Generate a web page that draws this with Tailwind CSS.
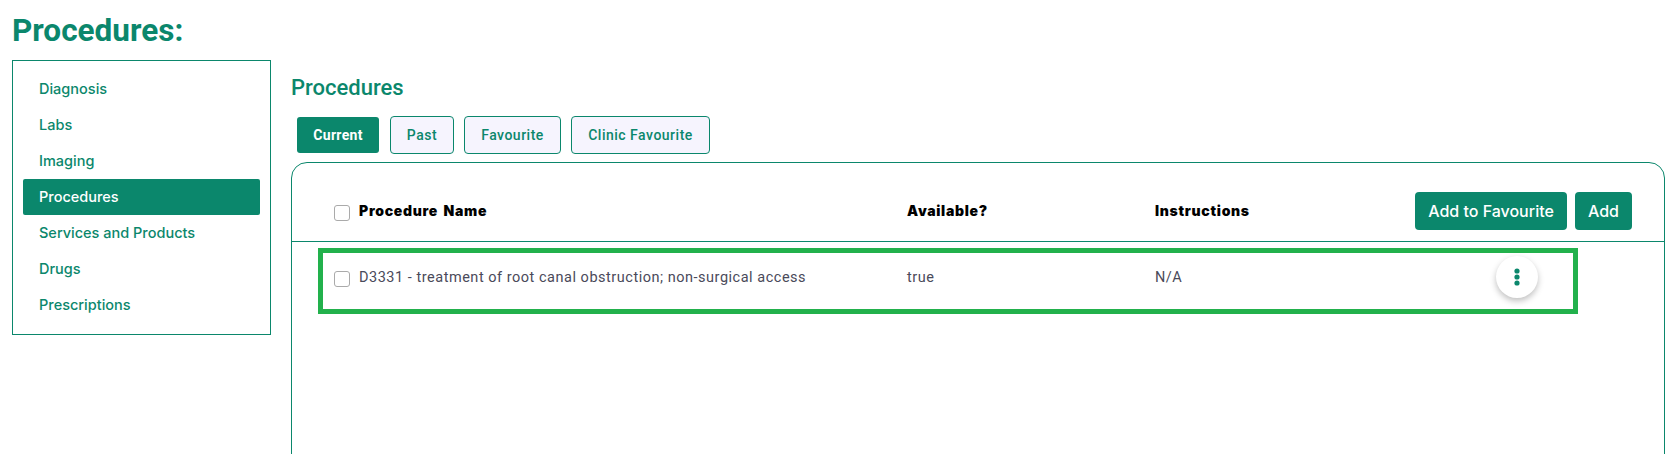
<!DOCTYPE html>
<html><head><meta charset="utf-8">
<script src="https://cdn.jsdelivr.net/npm/@tailwindcss/browser@4"></script>
</head>
<body class="bg-white overflow-hidden h-[454px] font-['Roboto',sans-serif]">
<div class="pl-3 pr-2 pt-3">
  <h1 class="text-[31.5px] leading-[36px] font-bold text-[#0b876c] pt-[1px] -mb-[1px]">Procedures:</h1>
  <div class="flex mt-3 items-start">
    <nav class="w-[259px] h-[275px] border border-[#0b876c] px-[10px] pt-[10px] font-['Inter',sans-serif] text-[14.5px] font-medium text-[#0b876c] shrink-0">
      <a class="flex items-center h-9 pl-4">Diagnosis</a>
      <a class="flex items-center h-9 pl-4">Labs</a>
      <a class="flex items-center h-9 pl-4">Imaging</a>
      <a class="flex items-center h-9 pl-4 bg-[#0b876c] text-white rounded-[2px]">Procedures</a>
      <a class="flex items-center h-9 pl-4">Services and Products</a>
      <a class="flex items-center h-9 pl-4">Drugs</a>
      <a class="flex items-center h-9 pl-4">Prescriptions</a>
    </nav>
    <main class="ml-[20px] flex-1 min-w-0">
      <h2 class="text-[22px] leading-[28px] font-medium text-[#0b876c] mt-[14px]">Procedures</h2>
      <div class="flex items-center mt-[14px] ml-[6px] text-[14px] font-medium leading-none">
        <button class="w-[82px] h-9 rounded-[3px] bg-[#0b876c] text-white font-bold tracking-[0.3px]">Current</button>
        <button class="w-[64px] h-[38px] ml-[11px] rounded-[4px] border border-[#0b876c] bg-[#f6f4fe] text-[#0b876c] tracking-[0.5px]">Past</button>
        <button class="w-[97px] h-[38px] ml-[10px] rounded-[4px] border border-[#0b876c] bg-[#f6f4fe] text-[#0b876c] tracking-[0.5px]">Favourite</button>
        <button class="w-[139px] h-[38px] ml-[10px] rounded-[4px] border border-[#0b876c] bg-[#f6f4fe] text-[#0b876c] tracking-[0.5px]">Clinic Favourite</button>
      </div>
      <section class="mt-2 h-[400px] border border-[#0b876c] rounded-t-[16px]">
        <div class="h-[79px] flex items-center border-b border-[#0b876c] pl-[42px] pr-8 pt-[18px]">
          <input type="checkbox" class="appearance-none w-4 h-4 rounded-[3px] border border-[#aaaaaa] bg-white shrink-0 mt-1">
          <div class="grid grid-cols-[548px_248px_1fr] flex-1 ml-[9px] font-['Inter',sans-serif] text-[14px] font-black text-black tracking-[0.7px] [word-spacing:2px] -mt-[1px]">
            <span>Procedure Name</span><span>Available?</span><span>Instructions</span>
          </div>
          <button class="w-[152px] h-[38px] rounded-[4px] bg-[#0b876c] text-white font-['Inter',sans-serif] text-[16px] font-medium">Add to Favourite</button>
          <button class="w-[57px] h-[38px] ml-2 rounded-[4px] bg-[#0b876c] text-white font-['Inter',sans-serif] text-[16px] font-medium">Add</button>
        </div>
        <div class="mt-[6px] ml-[26px] w-[1260px] h-[66px] border-[5px] border-[#22b14c] flex items-center pl-[11px]">
          <input type="checkbox" class="appearance-none w-4 h-4 rounded-[3px] border border-[#aaaaaa] bg-white shrink-0 -mt-[4px]">
          <div class="grid grid-cols-[548px_248px_1fr] w-[1036px] shrink-0 ml-[9px] text-[14.5px] text-[#4a4a5a] tracking-[0.52px] -mt-[7px]">
            <span class="whitespace-nowrap">D3331 - treatment of root canal obstruction; non-surgical access</span><span>true</span><span>N/A</span>
          </div>
          <button class="w-[42px] h-[42px] ml-[101px] -mt-[8px] rounded-full bg-white shadow-[0_3px_6px_rgba(0,0,0,0.25)] flex items-center justify-center">
            <svg width="6" height="18" viewBox="0 0 6 18" fill="#0b876c"><circle cx="3" cy="3" r="2.6"/><circle cx="3" cy="9" r="2.6"/><circle cx="3" cy="15" r="2.6"/></svg>
          </button>
        </div>
      </section>
    </main>
  </div>
</div>
</body></html>
